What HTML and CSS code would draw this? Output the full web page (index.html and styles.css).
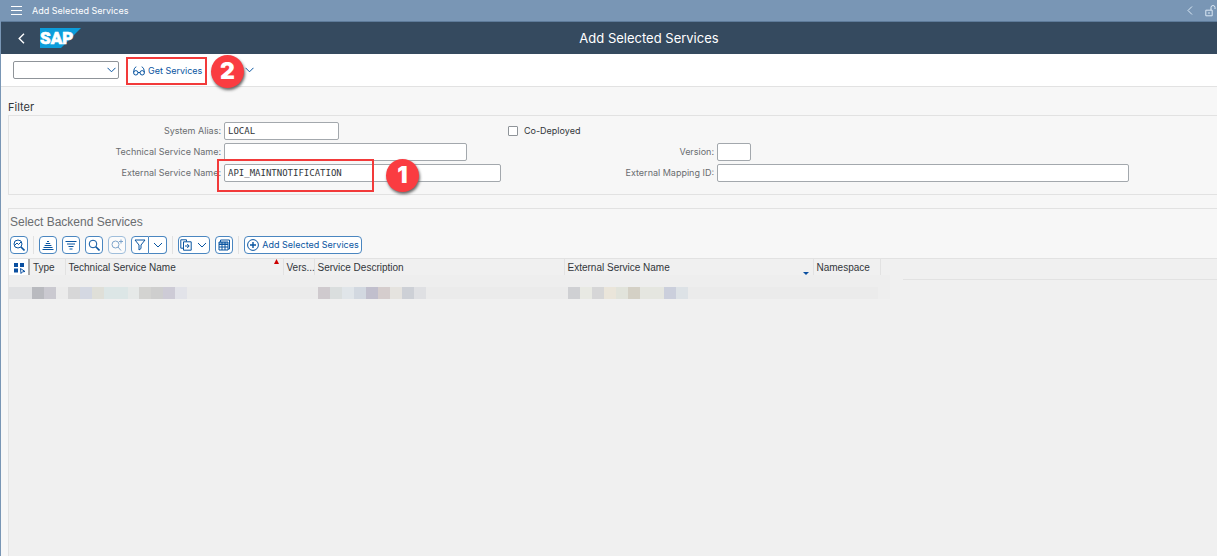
FILE: index.html
```html
<!DOCTYPE html>
<html lang="en">
<head>
<meta charset="utf-8">
<title>Add Selected Services</title>
<link rel="stylesheet" href="styles.css">
</head>
<body>
<div class="app">
  <header class="topbar">
    <button class="plain" aria-label="Menu"><svg class="menu-icon" width="11" height="9" viewBox="0 0 11 9"><path d="M0 .5h11M0 4.500h11M0 8.500h11"/></svg></button>
    <span class="topbar-title">Add Selected Services</span>
    <span class="topbar-tools">
      <button class="plain" aria-label="Previous"><svg width="6" height="9" viewBox="0 0 6 9"><path d="M5 .5L1 4.500L5 8.500"/></svg></button>
      <button class="plain" aria-label="Unlock"><svg width="12" height="12" viewBox="0 0 12 12"><path d="M.8 5.200h6.400v5.600H.8zM6 5V2.500a2 2 0 0 1 4 0V4M4 7v2"/></svg></button>
    </span>
  </header>
  <div class="shell">
    <button class="plain back" aria-label="Back"><svg width="7" height="11" viewBox="0 0 7 11"><path d="M6 .8L1.200 5.500L6 10.200"/></svg></button>
    <svg class="logo" width="41" height="20" viewBox="0 0 41 20" role="img" aria-label="SAP"><path d="M0 0h41L21 20H0z" fill="#0d9ddb"/><text x="0" y="16">SAP</text></svg>
    <h1>Add Selected Services</h1>
  </div>
  <div class="toolbar">
    <span class="command"><select aria-label="Command"><option></option></select><svg width="9" height="6" viewBox="0 0 9 6"><path d="M.5 .8L4.500 4.800L8.500 .8"/></svg></span>
    <button class="get-services"><svg width="12" height="10" viewBox="0 0 12 10"><circle cx="2.800" cy="6.800" r="2.200"/><circle cx="9.200" cy="6.800" r="2.200"/><path d="M.7 6.500C.7 3.500 1.500 1.500 3.300.8M7 6.500M11.300 6.500C11.300 3.500 10.500 1.500 8.700.8M5 6.500h2"/></svg>Get Services</button>
    <span class="badge badge-toolbar">2</span>
    <button class="plain more" aria-label="More"><svg width="9" height="6" viewBox="0 0 9 6"><path d="M.5 .8L4.500 4.800L8.500 .8"/></svg></button>
  </div>
  <main>
    <h2 class="filter-title">Filter</h2>
    <form class="filter">
      <label for="alias">System Alias:</label>
      <input id="alias" class="w-alias" type="text" value="LOCAL">
      <div class="check"><input id="co" type="checkbox"><label for="co">Co-Deployed</label></div>
      <label for="tech">Technical Service Name:</label>
      <input id="tech" class="w-tech" type="text">
      <label for="version">Version:</label>
      <input id="version" class="w-version" type="text">
      <label for="ext">External Service Name:</label>
      <div class="ext-field">
        <input id="ext" class="w-ext" type="text" value="API_MAINTNOTIFICATION">
        <span class="highlight"></span>
        <span class="badge badge-field">1</span>
      </div>
      <label for="mapping">External Mapping ID:</label>
      <input id="mapping" class="w-mapping" type="text">
    </form>
    <section class="services">
      <h2 class="services-title">Select Backend Services</h2>
      <div class="tools">
        <button class="tool" aria-label="Details"><svg viewBox="0 0 12 12"><circle cx="5" cy="5" r="4"/><path d="M8 8l3.500 3.500" stroke-width="1.600"/><path d="M2 6l2-2 1.500 1.500L8 3"/></svg></button>
        <span class="sep"></span>
        <button class="tool" aria-label="Sort ascending"><svg viewBox="0 0 12 12"><path d="M5 2.500h2M3.800 4.500h4.400M2.600 6.500h6.800M1.500 8.500h9M.5 10.500h11"/></svg></button>
        <button class="tool" aria-label="Sort descending"><svg viewBox="0 0 12 12"><path d="M.5 2.500h11M2 5h8M3.500 7.500h5M4.500 10h3"/></svg></button>
        <button class="tool" aria-label="Find"><svg viewBox="0 0 12 12"><circle cx="5" cy="5" r="3.800"/><path d="M7.800 7.800l3.700 3.700" stroke-width="1.600"/></svg></button>
        <button class="tool" aria-label="Find next" disabled><svg viewBox="0 0 12 12"><circle cx="4.500" cy="5.500" r="3.500"/><path d="M7 8l3 3.500M8 2.500h4M10 .5v4"/></svg></button>
        <span class="split">
          <button class="tool" aria-label="Filter"><svg viewBox="0 0 12 12"><path d="M1 1h10L7 6v3.500L5 11V6z"/></svg></button>
          <button class="tool" aria-label="Filter options"><svg viewBox="0 0 12 12"><path d="M2 4l4 4 4-4"/></svg></button>
        </span>
        <span class="sep"></span>
        <button class="tool wide" aria-label="Export"><svg viewBox="0 0 12 12"><path d="M6.500 2.500V.8H.8v8.400H3.500M3.500 2.800h7.700v8.400H3.500zM5 7h4M7.200 5l2 2-2 2"/></svg><svg viewBox="0 0 12 12"><path d="M2 4l4 4 4-4"/></svg></button>
        <button class="tool" aria-label="Choose layout"><svg viewBox="0 0 12 12"><path d="M2.500 3V1h9v9H10M1 3h9v8H1zM1 5.500h9M1 8h9M4 3v8M7 3v8M1 4h9"/></svg></button>
        <span class="sep"></span>
        <button class="tool add"><svg viewBox="0 0 12 12"><circle cx="6" cy="6" r="5.400"/><path d="M6 3v6M3 6h6" stroke-width="1.400"/></svg>Add Selected Services</button>
      </div>
      <div class="grid">
        <table>
          <colgroup><col class="c-select"><col class="c-type"><col class="c-tech"><col class="c-version"><col class="c-desc"><col class="c-ext"><col class="c-space"><col></colgroup>
          <thead>
            <tr>
              <th><button class="plain" aria-label="Select all"><svg width="12" height="12" viewBox="0 0 12 12"><path d="M0 1h4v4H0zM6 1h4v4H6zM0 6.500h4v4H0z" fill="#0a4fa0" stroke="none"/><path d="M6.500 6.500l4.500 3-2.500.3-1.500 1.700z" fill="#fff" stroke="#0a4fa0"/></svg></button></th>
              <th>Type</th>
              <th>Technical Service Name<svg class="sort-mark" width="5" height="5" viewBox="0 0 5 5"><path d="M2.500 0L5 5H0z" fill="#c00"/></svg></th>
              <th>Vers...</th>
              <th>Service Description</th>
              <th>External Service Name<svg class="filter-mark" width="6" height="3" viewBox="0 0 6 3"><path d="M0 0h6L3 3z" fill="#0a4fa0"/></svg></th>
              <th>Namespace</th>
              <th></th>
            </tr>
          </thead>
        </table>
        <div class="masked">
          <svg width="881" height="24" viewBox="0 0 881 24" aria-hidden="true">
            <path d="M0 0h881v24H0z" fill="#eeeeee"/>
            <path d="M0 12h869v12H0z" fill="#ebebeb"/>
            <path d="M0 12h23v12H0z" fill="#e0e1e3"/>
            <path d="M23 12h12v12H23z" fill="#b9babf"/><path d="M35 12h12v12H35z" fill="#cac9d0"/>
            <path d="M59 12h12v12H59z" fill="#d7d7d8"/><path d="M71 12h12v12H71z" fill="#d4d8e2"/><path d="M83 12h12v12H83z" fill="#dfdfd8"/><path d="M95 12h24v12H95z" fill="#dce6e6"/><path d="M119 12h11v12h-11z" fill="#e6e9e8"/><path d="M130 12h12v12h-12z" fill="#d3d3d1"/><path d="M142 12h12v12h-12z" fill="#cecece"/><path d="M154 12h12v12h-12z" fill="#cdcbd6"/><path d="M166 12h12v12h-12z" fill="#e2e3e9"/>
            <path d="M309 12h12v12h-12z" fill="#cfcace"/><path d="M321 12h12v12h-12z" fill="#dadede"/><path d="M333 12h12v12h-12z" fill="#e0e5e9"/><path d="M345 12h12v12h-12z" fill="#d2d8e0"/><path d="M357 12h12v12h-12z" fill="#c1bfcd"/><path d="M369 12h12v12h-12z" fill="#d5cdcd"/><path d="M381 12h12v12h-12z" fill="#e5e3df"/><path d="M393 12h12v12h-12z" fill="#cdd0d6"/><path d="M405 12h12v12h-12z" fill="#dfe0e3"/>
            <path d="M559 12h12v12h-12z" fill="#cfd0d3"/><path d="M571 12h12v12h-12z" fill="#e8e9e3"/><path d="M583 12h12v12h-12z" fill="#d6d6d7"/><path d="M595 12h12v12h-12z" fill="#eae5da"/><path d="M607 12h12v12h-12z" fill="#e1e3db"/><path d="M619 12h12v12h-12z" fill="#d4d0c5"/><path d="M631 12h24v12h-24z" fill="#e5e6e0"/><path d="M655 12h12v12h-12z" fill="#cbcfdc"/><path d="M667 12h12v12h-12z" fill="#dde2e6"/>
          </svg>
          <span class="header-line"></span>
        </div>
      </div>
    </section>
  </main>
</div>
</body>
</html>
```

FILE: styles.css
```css
* { box-sizing: border-box; }
body { margin: 0; font: 9px/16px Inter, "Liberation Sans", sans-serif; color: #32363a; background: #f7f7f7; }
h1, h2 { margin: 0; font-weight: 400; }
button, input, select { font: inherit; color: inherit; margin: 0; padding: 0; }
svg { display: block; flex: none; fill: none; stroke: currentColor; stroke-width: 1; }
.app { min-height: 100vh; display: flex; flex-direction: column; border-left: 1px solid #7996b5; }
.plain { border: 0; background: none; display: flex; }

.topbar { display: flex; align-items: center; height: 22px; padding-left: 10px; background: #7996b5; border-bottom: 1px solid #5e7b9a; color: #fff; overflow: hidden; }
.topbar-title { margin-left: 10px; }
.topbar-tools { margin-left: auto; display: flex; align-items: center; gap: 12px; color: #dbe8f4; }

.shell { display: grid; grid-template-columns: 39px 1fr 39px; align-items: center; height: 32px; background: #354a5f; color: #fff; }
.shell > * { grid-row: 1; }
.back { grid-column: 1; padding-left: 17px; }
.back svg { stroke-width: 1.4; }
.logo { grid-column: 2; stroke: none; }
.logo text { font: 900 17px Roboto, sans-serif; fill: #fff; stroke: #fff; stroke-width: .6; }
.shell h1 { grid-column: 1 / -1; text-align: center; padding-left: 80px; font-size: 13px; }

.toolbar { position: relative; display: flex; align-items: center; height: 33px; padding-left: 12px; background: #fff; border-bottom: 1px solid #e2e2e2; color: #0854a0; }
.command { display: grid; align-items: center; width: 106px; height: 18px; }
.command > * { grid-area: 1 / 1; }
.command select { width: 100%; height: 18px; border: 1px solid #8f9499; border-radius: 2px; appearance: none; background: #fff; }
.command svg { justify-self: end; margin-right: 3px; pointer-events: none; z-index: 1; }
.get-services { display: flex; align-items: center; gap: 3px; width: 81px; height: 28px; margin: 2px 0 0 7px; padding: 0 5px; border: 2px solid #f23a3a; background: #fff; white-space: nowrap; }
.more { margin-left: 38px; }
.badge { position: absolute; display: grid; place-items: center; width: 33px; height: 33px; border-radius: 50%; background: #fa3c41; color: #fff; font: 900 23px/1 Inter, sans-serif; box-shadow: 1px 2px 3px #666; }
.badge-toolbar { left: 210px; top: 1px; z-index: 2; }

main { flex: 1; display: flex; flex-direction: column; padding: 12px 0 0 7px; }
.filter-title { font-size: 11px; line-height: 16px; }
.filter { display: grid; grid-template-columns: 212px 281px 206px 1fr; column-gap: 3px; row-gap: 3px; padding: 6px 0 12px; border: 1px solid #e2e2e2; border-right: 0; }
.filter > label { text-align: right; line-height: 18px; color: #6a6d70; }
.filter input[type="text"] { height: 18px; padding: 0 3px; border: 1px solid #a3a8ad; border-radius: 2px; background: #fff; font: 9px "DejaVu Sans Mono", monospace; }
.check { grid-column: 3 / 5; display: flex; align-items: center; gap: 6px; }
.check input { appearance: none; width: 10px; height: 10px; border: 1px solid #8f9499; border-radius: 1px; background: #fff; }
.w-alias { width: 115px; }
.w-tech { width: 243px; }
.w-ext { width: 277px; }
.w-version { width: 34px; }
.w-mapping { width: 412px; max-width: 100%; }
.ext-field { position: relative; }
.ext-field input { display: block; }
.highlight { position: absolute; left: -7px; top: -5px; width: 157px; height: 33px; border: 2px solid #f23a3a; }
.badge-field { left: 162px; top: -5px; }

.services { flex: 1; display: flex; flex-direction: column; margin-top: 13px; border: 1px solid #e2e2e2; border-width: 1px 0 0 1px; }
.services-title { padding: 5px 0 0 1px; font: 12px/16px "Liberation Sans", sans-serif; color: #6a6d70; }
.tools { display: flex; align-items: center; gap: 5px; height: 28px; padding: 2px 0 0 1px; color: #0854a0; }
.tool { display: flex; align-items: center; justify-content: center; width: 18px; height: 18px; border: 1px solid #4a86c0; border-radius: 4px; background: #fff; white-space: nowrap; }
.tool svg { width: 12px; height: 12px; }
.tool:disabled { opacity: .5; color: inherit; }
.sep { width: 1px; height: 18px; background: #e2e2e2; }
.split { display: flex; }
.split .tool:first-child { border-radius: 4px 0 0 4px; }
.split .tool:last-child { border-radius: 0 4px 4px 0; border-left: 0; }
.wide { width: 32px; gap: 4px; }
.add { width: 118px; gap: 3px; }

.grid { flex: 1; background: #f0f0f0; border-top: 1px solid #e2e2e2; }
table { width: 100%; table-layout: fixed; border-collapse: collapse; }
.c-select { width: 20px; } .c-type { width: 36px; } .c-tech { width: 218px; } .c-version { width: 31px; } .c-desc { width: 250px; } .c-ext { width: 249px; } .c-space { width: 67px; }
th { position: relative; height: 16px; padding: 2px 0 0 3px; border-right: 1px solid #e2e2e2; font: 10px/14px "Liberation Sans", sans-serif; text-align: left; white-space: nowrap; }
th:first-child { padding-left: 5px; border-right: 2px solid #aaa; background: #fff; }
th:last-child { border: 0; }
.sort-mark { position: absolute; right: 4px; top: 0; stroke: none; }
.filter-mark { position: absolute; right: 4px; bottom: 0; stroke: none; }
.masked { display: flex; overflow: hidden; }
.masked svg { stroke: none; }
.header-line { flex: 1; margin: 4px 0 0 13px; border-top: 1px solid #e2e2e2; }
```
